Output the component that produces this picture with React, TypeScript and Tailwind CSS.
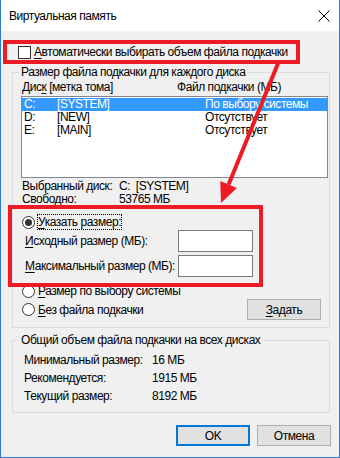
import React from "react"

function Acc({ k, rest }: { k: string; rest: string }) {
  return (
    <span>
      <span className="underline underline-offset-[2px] decoration-1">{k}</span>
      {rest}
    </span>
  )
}

function Radio({ checked = false }: { checked?: boolean }) {
  return (
    <span className="w-[13px] h-[13px] shrink-0 rounded-full border border-[#333333] bg-white flex items-center justify-center">
      {checked && <span className="w-[7px] h-[7px] rounded-full bg-[#333333]" />}
    </span>
  )
}

const DRIVES = [
  { d: "C:", label: "[SYSTEM]", size: "По выбору системы", selected: true },
  { d: "D:", label: "[NEW]", size: "Отсутствует", selected: false },
  { d: "E:", label: "[MAIN]", size: "Отсутствует", selected: false },
]

const TOTALS = [
  { label: "Минимальный размер:", value: "16 МБ" },
  { label: "Рекомендуется:", value: "1915 МБ" },
  { label: "Текущий размер:", value: "8192 МБ" },
]

export default function App() {
  return (
    <div className="w-[340px] h-[458px] relative flex flex-col bg-[#f0f0f0] border-x border-b border-[#2b7bd3] font-['Liberation_Sans',Arial,sans-serif] text-[12px] leading-[16px] tracking-[-0.45px] text-black whitespace-nowrap overflow-hidden">
      {/* title bar */}
      <div className="h-[31px] shrink-0 bg-white flex items-center justify-between pl-[8px] pr-[9px]">
        <span>Виртуальная память</span>
        <svg width="12" height="12" viewBox="0 0 12 12">
          <path d="M0.5 0.5 L11.5 11.5 M11.5 0.5 L0.5 11.5" stroke="#000" strokeWidth="1" />
        </svg>
      </div>

      {/* auto checkbox */}
      <div className="mt-[13px] h-[16px] flex items-center pl-[17px]">
        <span className="w-[13px] h-[13px] border border-[#333333] bg-white" />
        <span className="ml-[3px]">
          <Acc k="А" rest="втоматически выбирать объем файла подкачки" />
        </span>
      </div>

      {/* per-disk group */}
      <fieldset className="mt-[4px] ml-[11px] w-[318px] border border-[#dcdcdc] pb-[7px]">
        <legend className="ml-[6px] px-[2px]">Размер файла подкачки для каждого диска</legend>
        <div className="h-[14px] leading-[14px] flex pl-[9px]">
          <span className="w-[155px]">
            Дис<span className="underline underline-offset-[2px] decoration-1">к</span> [метка тома]
          </span>
          <span>Файл подкачки (МБ)</span>
        </div>
        <div className="mt-[2px] ml-[8px] w-[307px] h-[82px] border border-[#828790] bg-white pt-[1px]">
          {DRIVES.map(r => (
            <div
              key={r.d}
              className={r.selected ? "h-[13px] leading-[13px] flex pl-[2px] bg-[#3399ff] text-white" : "h-[13px] leading-[13px] flex pl-[2px]"}
            >
              <span className="w-[33px]">{r.d}</span>
              <span className="w-[148px]">{r.label}</span>
              <span>{r.size}</span>
            </div>
          ))}
        </div>

        <div className="mt-[2px] pl-[9px]">
          <div className="h-[13px] leading-[13px] flex">
            <span className="w-[97px] shrink-0">Выбранный диск:</span>
            <span>C:&nbsp;&nbsp;[SYSTEM]</span>
          </div>
          <div className="h-[13px] leading-[13px] flex">
            <span className="w-[97px] shrink-0">Свободно:</span>
            <span>53765 МБ</span>
          </div>
        </div>

        <div className="mt-[8px] h-[16px] flex items-center pl-[9px]">
          <Radio checked />
          <span className="ml-[2px] h-[16px] leading-[14px] border border-dotted border-black">
            <Acc k="У" rest="казать размер:" />
          </span>
        </div>
        <div className="h-[22px] flex items-center pl-[12px]">
          <span className="w-[153px] shrink-0">
            <Acc k="И" rest="сходный размер (МБ):" />
          </span>
          <span className="w-[75px] h-[22px] shrink-0 border border-[#7a7a7a] bg-white" />
        </div>
        <div className="mt-[3px] h-[22px] flex items-center pl-[12px]">
          <span className="w-[153px] shrink-0">
            <Acc k="М" rest="аксимальный размер (МБ):" />
          </span>
          <span className="w-[75px] h-[22px] shrink-0 border border-[#7a7a7a] bg-white" />
        </div>

        <div className="mt-[6px] h-[16px] flex items-center pl-[9px]">
          <Radio />
          <span className="ml-[3px]">
            <Acc k="Р" rest="азмер по выбору системы" />
          </span>
        </div>
        <div className="h-[21px] flex items-center justify-between pl-[9px] pr-[8px]">
          <div className="flex items-center">
            <Radio />
            <span className="ml-[3px]">
              <Acc k="Б" rest="ез файла подкачки" />
            </span>
          </div>
          <button className="w-[74px] h-[21px] border border-[#adadad] bg-[#e1e1e1] flex items-center justify-center">
            <Acc k="З" rest="адать" />
          </button>
        </div>
      </fieldset>

      {/* totals group */}
      <fieldset className="mt-[4px] ml-[11px] w-[318px] border border-[#dcdcdc] pt-[3px] pb-[7px]">
        <legend className="ml-[6px] px-[2px]">Общий объем файла подкачки на всех дисках</legend>
        {TOTALS.map(t => (
          <div key={t.label} className="h-[18px] leading-[18px] flex pl-[11px]">
            <span className="w-[128px] shrink-0">{t.label}</span>
            <span>{t.value}</span>
          </div>
        ))}
      </fieldset>

      {/* dialog buttons */}
      <div className="mt-[12px] flex justify-end gap-[7px] pr-[8px]">
        <button className="w-[74px] h-[21px] border-2 border-[#0078d7] bg-[#e1e1e1] flex items-center justify-center">OK</button>
        <button className="w-[74px] h-[21px] border border-[#adadad] bg-[#e1e1e1] flex items-center justify-center">Отмена</button>
      </div>

      {/* red annotations */}
      <div className="absolute left-[2px] top-[40px] w-[297px] h-[24px] border-4 border-[#ed1c24] pointer-events-none" />
      <div className="absolute left-[7px] top-[205px] w-[255px] h-[82px] border-4 border-[#ed1c24] pointer-events-none" />
      <svg className="absolute left-[-1px] top-0 pointer-events-none" width="340" height="458" viewBox="0 0 340 458">
        <path d="M279 61 L228.6 184.5" stroke="#ed1c24" strokeWidth="4" />
        <polygon points="220.3,181.1 236.9,187.9 221,203" fill="#ed1c24" />
      </svg>
    </div>
  )
}
